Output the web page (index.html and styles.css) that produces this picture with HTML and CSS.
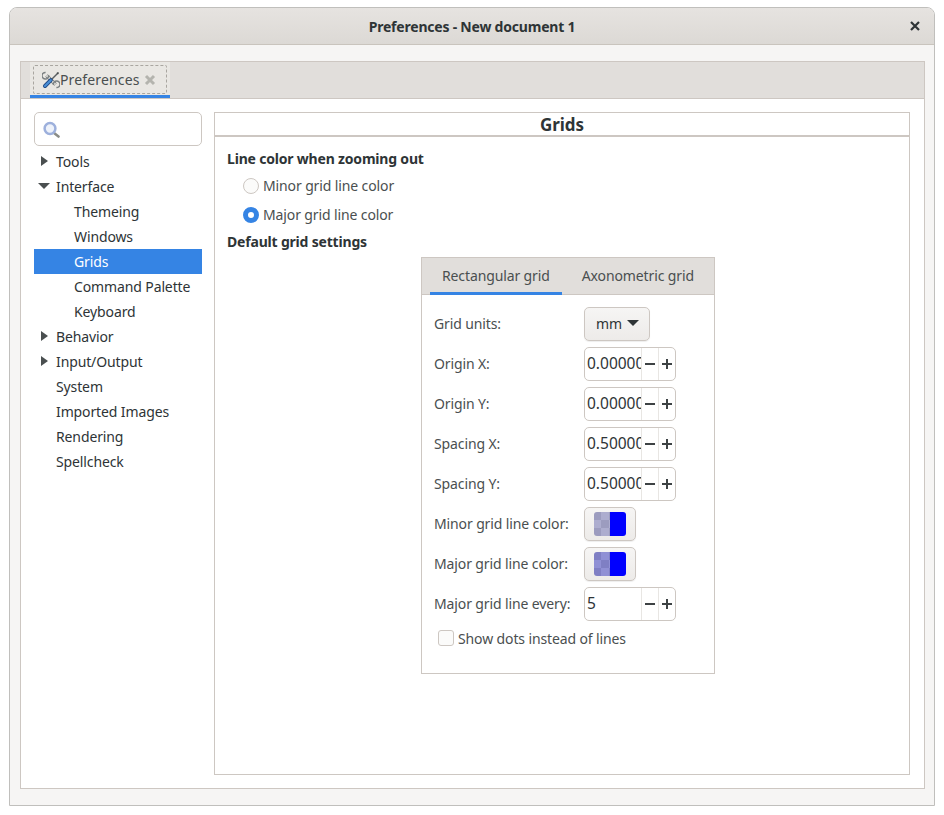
FILE: index.html
```html
<!DOCTYPE html>
<html lang="en">
<head>
  <meta charset="UTF-8" />
  <title>Preferences - New document 1</title>
  <link rel="stylesheet" href="styles.css">
</head>
<body>

<div class="window">
  <header class="titlebar">
    <span></span>
    <span class="title">Preferences - New document 1</span>
    <svg class="close" width="10" height="10" viewBox="0 0 10 10"><path d="M1 1l8 8M9 1l-8 8" stroke="#2e3436" stroke-width="2.2"/></svg>
  </header>

  <div class="content">
    <div class="notebook">
      <div class="tabbar">
        <div class="doctab">
          <div class="doctab-inner">
            <svg width="18" height="18" viewBox="0 0 18 18">
              <path d="M4.500 4.500L13.500 13.500" stroke="#6e7375" stroke-width="3.400"/>
              <path d="M4.500 4.500L13.500 13.500" stroke="#e4e4df" stroke-width="1.800"/>
              <path d="M3.600 1.400a3.300 3.300 0 1 0 3 3M14.400 16.600a3.300 3.300 0 1 0-3-3" fill="none" stroke="#7b8082" stroke-width="1.500"/>
              <path d="M9.500 8.500L15.500 2.500" stroke="#5a5f61" stroke-width="1.500"/>
              <path d="M14.500 2l1.500-1 1 1-1 1.500z" fill="#3a3f41"/>
              <path d="M3 15L8.800 9.200" stroke="#204a87" stroke-width="4" stroke-linecap="round"/>
              <path d="M3 15L8.800 9.200" stroke="#4a8fd6" stroke-width="2.200" stroke-linecap="round"/>
            </svg>
            <span class="doctab-label">Preferences</span>
            <svg class="tabclose" width="12" height="12" viewBox="0 0 12 12"><path d="M2 2l8 8M10 2l-8 8" stroke="#b4b4ae" stroke-width="3"/></svg>
          </div>
        </div>
      </div>

      <div class="page">
        <aside class="sidebar">
          <div class="search">
            <svg width="18" height="18" viewBox="0 0 18 18">
              <path d="M11 13l4.500 3.500" stroke="#8a8c87" stroke-width="2.600" stroke-linecap="round"/>
              <circle cx="7" cy="8.500" r="5.400" fill="#eef2fa" stroke="#9db0dc" stroke-width="2.500"/>
            </svg>
          </div>
          <ul class="tree">
            <li class="row"><i class="arrow right"></i>Tools</li>
            <li class="row"><i class="arrow down"></i>Interface</li>
            <li class="row child">Themeing</li>
            <li class="row child">Windows</li>
            <li class="row child selected">Grids</li>
            <li class="row child">Command Palette</li>
            <li class="row child">Keyboard</li>
            <li class="row"><i class="arrow right"></i>Behavior</li>
            <li class="row"><i class="arrow right"></i>Input/Output</li>
            <li class="row">System</li>
            <li class="row">Imported Images</li>
            <li class="row">Rendering</li>
            <li class="row">Spellcheck</li>
          </ul>
        </aside>

        <section class="panel">
          <h2 class="panel-title">Grids</h2>
          <div class="panel-body">
            <div class="heading">Line color when zooming out</div>
            <label class="radio-row"><i class="radio"></i>Minor grid line color</label>
            <label class="radio-row"><i class="radio checked"></i>Major grid line color</label>
            <div class="heading second">Default grid settings</div>

            <div class="subbook">
              <div class="subtabs">
                <div class="subtab active">Rectangular grid</div>
                <div class="subtab">Axonometric grid</div>
              </div>
              <div class="form">
                <div class="form-row">
                  <span class="form-label">Grid units:</span>
                  <div class="btn combo">mm<i class="arrow down dark"></i></div>
                </div>
                <div class="form-row">
                  <span class="form-label">Origin X:</span>
                  <div class="spin"><span class="spin-val">0.00000</span><span class="spin-btn minus"></span><span class="spin-btn plus"></span></div>
                </div>
                <div class="form-row">
                  <span class="form-label">Origin Y:</span>
                  <div class="spin"><span class="spin-val">0.00000</span><span class="spin-btn minus"></span><span class="spin-btn plus"></span></div>
                </div>
                <div class="form-row">
                  <span class="form-label">Spacing X:</span>
                  <div class="spin"><span class="spin-val">0.50000</span><span class="spin-btn minus"></span><span class="spin-btn plus"></span></div>
                </div>
                <div class="form-row">
                  <span class="form-label">Spacing Y:</span>
                  <div class="spin"><span class="spin-val">0.50000</span><span class="spin-btn minus"></span><span class="spin-btn plus"></span></div>
                </div>
                <div class="form-row">
                  <span class="form-label">Minor grid line color:</span>
                  <div class="btn swatch-btn"><div class="swatch minor"></div></div>
                </div>
                <div class="form-row">
                  <span class="form-label">Major grid line color:</span>
                  <div class="btn swatch-btn"><div class="swatch major"></div></div>
                </div>
                <div class="form-row">
                  <span class="form-label">Major grid line every:</span>
                  <div class="spin"><span class="spin-val">5</span><span class="spin-btn minus"></span><span class="spin-btn plus"></span></div>
                </div>
                <label class="check-row"><i class="check"></i>Show dots instead of lines</label>
              </div>
            </div>
          </div>
        </section>
      </div>
    </div>
  </div>
</div>

</body>
</html>
```

FILE: styles.css
```css
* {
  box-sizing: border-box;
}

html, body {
  height: 100%;
}

body {
  margin: 0;
  padding: 7px 9px 9px 9px;
  background: #ffffff;
  color: #2e3436;
  font-family: "Noto Sans", sans-serif;
  font-size: 14px;
  letter-spacing: -0.12px;
}

.window {
  width: 926px;
  height: 799px;
  display: flex;
  flex-direction: column;
  background: #f6f5f4;
  border: 1px solid #c0bfbc;
  border-radius: 8px 8px 0 0;
}

.titlebar {
  height: 37px;
  display: grid;
  grid-template-columns: 1fr auto 1fr;
  align-items: center;
  background: linear-gradient(#e6e3e0, #dcd9d5);
  border-bottom: 1px solid #c9c4bd;
  border-radius: 7px 7px 0 0;
}

.title {
  font-weight: 700;
  letter-spacing: -0.21px;
}

.close {
  justify-self: end;
  margin-right: 14px;
}

.content {
  flex: 1;
  padding: 16px 9px 16px 10px;
}

.notebook {
  height: 100%;
  display: flex;
  flex-direction: column;
  background: #ffffff;
  border: 1px solid #cdc7c2;
}

.tabbar {
  height: 37px;
  padding-left: 9px;
  background: #e1dedb;
  border-bottom: 1px solid #cdc7c2;
}

.doctab {
  width: 140px;
  height: 36px;
  padding: 3px 3px 0 3px;
  background: #e9e7e3;
  border-bottom: 3px solid #3584e4;
}

.doctab-inner {
  height: 29px;
  display: flex;
  align-items: center;
  padding-left: 8px;
  border: 1px dashed #a9a6a0;
  border-radius: 2px;
  color: #4a4f50;
}

.doctab-label {
  letter-spacing: 0.15px;
}

.tabclose {
  margin-left: 4px;
}

.page {
  flex: 1;
  display: flex;
  gap: 12px;
  padding: 13px 14px 13px 13px;
}

.sidebar {
  width: 168px;
}

.search {
  height: 34px;
  display: flex;
  align-items: center;
  padding-left: 8px;
  margin-bottom: 3px;
  background: #ffffff;
  border: 1px solid #cdc7c2;
  border-radius: 5px;
}

.tree {
  margin: 0;
  padding: 0;
  list-style: none;
}

.row {
  height: 25px;
  display: flex;
  align-items: center;
  padding-left: 22px;
  position: relative;
}

.row.child {
  padding-left: 40px;
}

.row.selected {
  background: #3584e4;
  color: #ffffff;
}

.arrow {
  display: block;
  width: 0;
  height: 0;
  border-style: solid;
}

.row .arrow {
  position: absolute;
}

.arrow.right {
  left: 7px;
  top: 7px;
  border-width: 5.500px 0 5.500px 7px;
  border-color: transparent transparent transparent #4a4f50;
}

.arrow.down {
  left: 4px;
  top: 9px;
  border-width: 6px 6px 0 6px;
  border-color: #4a4f50 transparent transparent transparent;
}

.arrow.dark {
  margin-left: 5px;
  border-color: #2e3436 transparent transparent transparent;
}

.panel {
  flex: 1;
  display: flex;
  flex-direction: column;
  border: 1px solid #cdc7c2;
}

.panel-title {
  height: 24px;
  margin: 0;
  font-size: 17px;
  line-height: 23px;
  font-weight: 700;
  letter-spacing: -0.1px;
  text-align: center;
  border-bottom: 2px solid #cdc7c2;
}

.panel-body {
  padding: 12px 12px 0 12px;
}

.heading {
  height: 20px;
  line-height: 20px;
  font-weight: 700;
  letter-spacing: -0.19px;
}

.heading.second {
  margin-top: 3px;
}

.radio-row {
  height: 29px;
  display: flex;
  align-items: center;
  gap: 4px;
  padding-left: 16px;
  color: #4a4f50;
}

.heading + .radio-row {
  margin-top: 2px;
}

.radio {
  width: 16px;
  height: 16px;
  border: 1px solid #cdc7c2;
  border-radius: 50%;
  background: #fbfbfa;
}

.radio.checked {
  border: 5px solid #3584e4;
  background: #ffffff;
}

.subbook {
  width: 294px;
  height: 417px;
  margin: 5px 0 0 194px;
  border: 1px solid #cdc7c2;
}

.subtabs {
  height: 37px;
  display: flex;
  gap: 8px;
  padding-left: 8px;
  background: #e1dedb;
  border-bottom: 1px solid #cdc7c2;
}

.subtab {
  height: 37px;
  padding: 0 12px;
  line-height: 36px;
  color: #4a4f50;
}

.subtab.active {
  border-bottom: 3px solid #3584e4;
}

.form {
  display: flex;
  flex-direction: column;
  gap: 6px;
  padding: 12px 0 0 12px;
}

.form-row {
  display: grid;
  grid-template-columns: 150px auto;
  justify-content: start;
  align-items: center;
  height: 34px;
  color: #4a4f50;
}

.form-label {
  padding-bottom: 2px;
}

.btn {
  height: 34px;
  display: flex;
  align-items: center;
  background: linear-gradient(#f6f5f4, #edebe9);
  border: 1px solid #cdc7c2;
  border-radius: 5px;
  box-shadow: 0 1px 1px rgba(0, 0, 0, 0.07);
}

.combo {
  width: 66px;
  padding: 0 0 2px 11px;
  color: #2e3436;
}

.swatch-btn {
  width: 52px;
  padding-left: 9px;
}

.swatch {
  width: 32px;
  height: 24px;
  border-radius: 3px;
}

.swatch.minor {
  background:
    linear-gradient(90deg, transparent 50%, #0000ff 50%),
    repeating-conic-gradient(#adadcf 0 25%, #9c9cbf 0 50%) -1px 0 / 16px 16px;
}

.swatch.major {
  background:
    linear-gradient(90deg, transparent 50%, #0000ff 50%),
    repeating-conic-gradient(#9090d5 0 25%, #7f7fc4 0 50%) -1px 0 / 16px 16px;
}

.spin {
  width: 92px;
  height: 34px;
  display: flex;
  background: #ffffff;
  border: 1px solid #cdc7c2;
  border-radius: 5px;
  color: #2e3436;
}

.spin-val {
  width: 56px;
  padding-left: 2px;
  line-height: 31px;
  font-size: 15.500px;
  letter-spacing: 0;
  overflow: hidden;
  white-space: nowrap;
}

.spin-btn {
  width: 17px;
  border-left: 1px solid #e8e6e3;
}

.spin-btn.minus {
  background: linear-gradient(#3d4244, #3d4244) center / 10px 2px no-repeat;
}

.spin-btn.plus {
  background:
    linear-gradient(#3d4244, #3d4244) center / 10px 2px no-repeat,
    linear-gradient(#3d4244, #3d4244) center / 2px 10px no-repeat;
}

.check-row {
  height: 22px;
  display: flex;
  align-items: center;
  gap: 4px;
  padding-left: 4px;
  color: #4a4f50;
}

.check {
  width: 16px;
  height: 16px;
  border: 1px solid #cdc7c2;
  border-radius: 3px;
  background: #fbfbfa;
}
```
